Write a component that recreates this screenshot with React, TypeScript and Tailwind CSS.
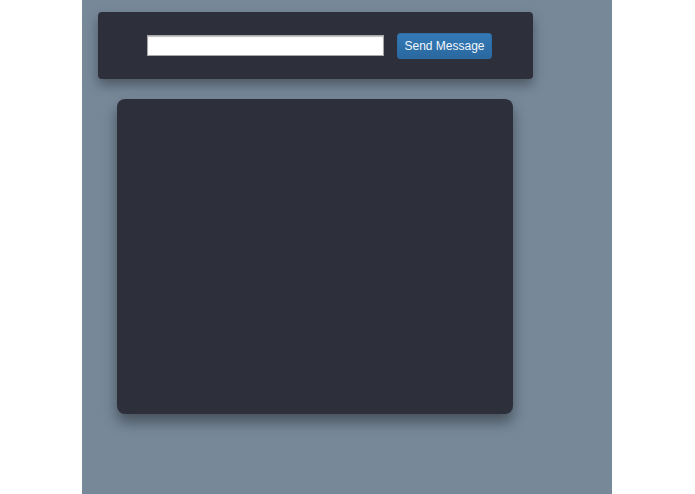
export default function App() {
  return (
    <div className="min-h-screen bg-white pl-[82px] font-['Liberation_Sans',Arial,sans-serif]">
      <div className="w-[530px] min-h-[494px] bg-[#778899] pt-3 pl-4">
        <div className="w-[435px] h-[67px] rounded bg-[#2d303b] shadow-[0_6px_12px_rgba(0,0,0,0.35)] flex items-center justify-center gap-[13px] pl-2">
          <input
            type="text"
            className="w-[237px] h-[21px] bg-white border border-[#a8a8a8] shadow-[inset_0_1px_1px_rgba(0,0,0,0.25)] outline-none"
          />
          <button
            type="button"
            className="w-[95px] h-[26px] rounded-[3px] bg-gradient-to-b from-[#337ab7] to-[#2a689f] border border-[#2e6da4] text-[#f2f6fa] text-[12px] leading-none"
          >
            Send Message
          </button>
        </div>
        <div className="mt-5 ml-[19px] w-[396px] h-[315px] rounded-lg bg-[#2d303b] shadow-[0_8px_14px_rgba(0,0,0,0.4)]" />
      </div>
    </div>
  );
}
